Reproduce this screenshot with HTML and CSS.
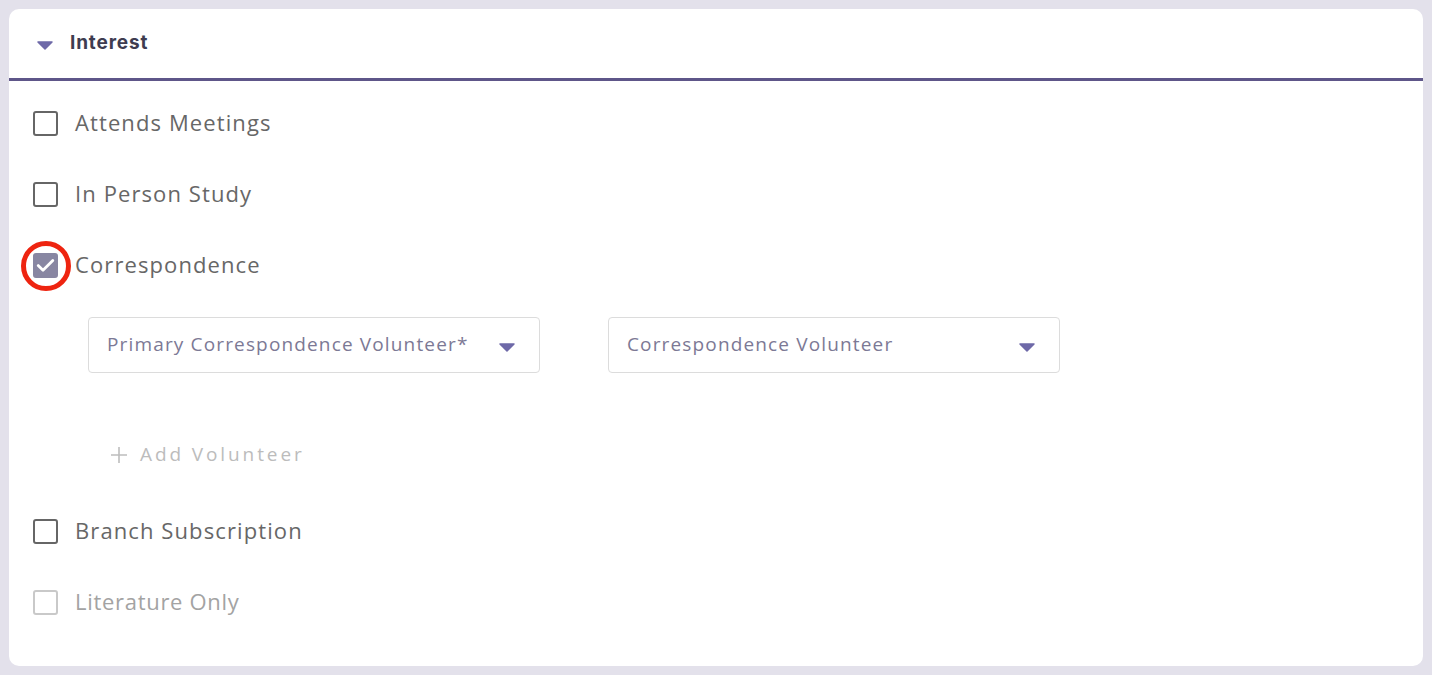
FILE: index.html
```html
<!DOCTYPE html>
<html>
<head>
<meta charset="utf-8">
<link rel="stylesheet" href="styles.css">
</head>
<body>
<div class="card">
  <div class="card-header">
    <svg class="caret" width="16" height="9" viewBox="0 0 16 9"><path d="M1 1 H15 L8 8 Z" fill="#6e69a8" stroke="#6e69a8" stroke-width="1.5" stroke-linejoin="round"/></svg>
    <span class="title">Interest</span>
  </div>
  <div class="card-body">
    <label class="row">
      <span class="box"></span>
      <span class="label">Attends Meetings</span>
    </label>
    <label class="row">
      <span class="box"></span>
      <span class="label">In Person Study</span>
    </label>
    <label class="row">
      <span class="box checked">
        <svg width="19" height="15" viewBox="0 0 19 15"><path d="M2.2 7.6 L7 12.2 L16.8 2.4" fill="none" stroke="#fff" stroke-width="2.8" stroke-linecap="round" stroke-linejoin="round"/></svg>
        <span class="ring"></span>
      </span>
      <span class="label">Correspondence</span>
    </label>
    <div class="selects">
      <div class="select">
        <span class="select-text">Primary Correspondence Volunteer*</span>
        <svg width="16" height="9" viewBox="0 0 16 9"><path d="M1 1 H15 L8 8 Z" fill="#6e69a8" stroke="#6e69a8" stroke-width="1.5" stroke-linejoin="round"/></svg>
      </div>
      <div class="select">
        <span class="select-text">Correspondence Volunteer</span>
        <svg width="16" height="9" viewBox="0 0 16 9"><path d="M1 1 H15 L8 8 Z" fill="#6e69a8" stroke="#6e69a8" stroke-width="1.5" stroke-linejoin="round"/></svg>
      </div>
    </div>
    <div class="add">
      <svg width="18" height="18" viewBox="0 0 18 18"><path d="M9 1 V17 M1 9 H17" stroke="#bdbdbd" stroke-width="1.6"/></svg>
      <span>Add Volunteer</span>
    </div>
    <label class="row row-branch">
      <span class="box"></span>
      <span class="label">Branch Subscription</span>
    </label>
    <label class="row disabled">
      <span class="box"></span>
      <span class="label">Literature Only</span>
    </label>
  </div>
</div>
</body>
</html>
```
FILE: styles.css
```css
html, body {
  margin: 0;
  padding: 0;
}
body {
  background: #e3e1eb;
  font-family: "Open Sans", "Noto Sans", sans-serif;
  padding: 9px;
  width: 1432px;
  height: 675px;
  box-sizing: border-box;
}
.card {
  background: #fff;
  border-radius: 10px;
  width: 1414px;
  height: 657px;
  box-sizing: border-box;
  overflow: hidden;
}
.card-header {
  height: 69px;
  border-bottom: 3px solid #5e5689;
  display: flex;
  align-items: center;
  padding-left: 28px;
  box-sizing: content-box;
}
.caret {
  margin-top: 4px;
  margin-right: 17px;
}
.title {
  font-family: "Inter", "Open Sans", sans-serif;
  font-weight: 700;
  font-size: 19px;
  color: #3e3c50;
  letter-spacing: 0.85px;
  padding-bottom: 2px;
}
.card-body {
  padding: 7px 0 0 24px;
  display: flex;
  flex-direction: column;
}
.row {
  height: 71px;
  display: flex;
  align-items: center;
}
.box {
  position: relative;
  width: 25px;
  height: 25px;
  box-sizing: border-box;
  border: 2.7px solid #666666;
  border-radius: 3px;
  flex: none;
  display: flex;
  align-items: center;
  justify-content: center;
}
.box.checked {
  background: #8886a2;
  border-color: #8886a2;
}
.ring {
  position: absolute;
  left: 50%;
  top: 50%;
  width: 50px;
  height: 50px;
  box-sizing: border-box;
  transform: translate(-50%, -50%);
  border: 5px solid #ee2410;
  border-radius: 50%;
}
.label {
  margin-left: 17px;
  font-size: 22px;
  color: #676767;
  letter-spacing: 1.1px;
  padding-bottom: 4px;
}
.disabled .box {
  border-color: #c9c9c9;
}
.disabled .label {
  color: #a3a3a3;
  letter-spacing: 0.7px;
}
.selects {
  display: flex;
  gap: 68px;
  margin-top: 16px;
  padding-left: 55px;
}
.select {
  width: 452px;
  height: 56px;
  box-sizing: border-box;
  border: 1.5px solid #dcdcdc;
  border-radius: 4px;
  display: flex;
  align-items: center;
  justify-content: space-between;
  padding: 0 24px 0 18px;
}
.select svg {
  margin-top: 5px;
}
.select-text {
  font-size: 19px;
  color: #7c7995;
  letter-spacing: 1.15px;
  padding-bottom: 2px;
}
.add {
  margin-top: 64px;
  height: 36px;
  display: flex;
  align-items: center;
  padding-left: 77px;
  color: #bcbcbc;
  font-size: 19px;
  letter-spacing: 2.9px;
}
.add span {
  margin-left: 12px;
  padding-bottom: 2px;
}
.row-branch {
  margin-top: 23px;
}
```
